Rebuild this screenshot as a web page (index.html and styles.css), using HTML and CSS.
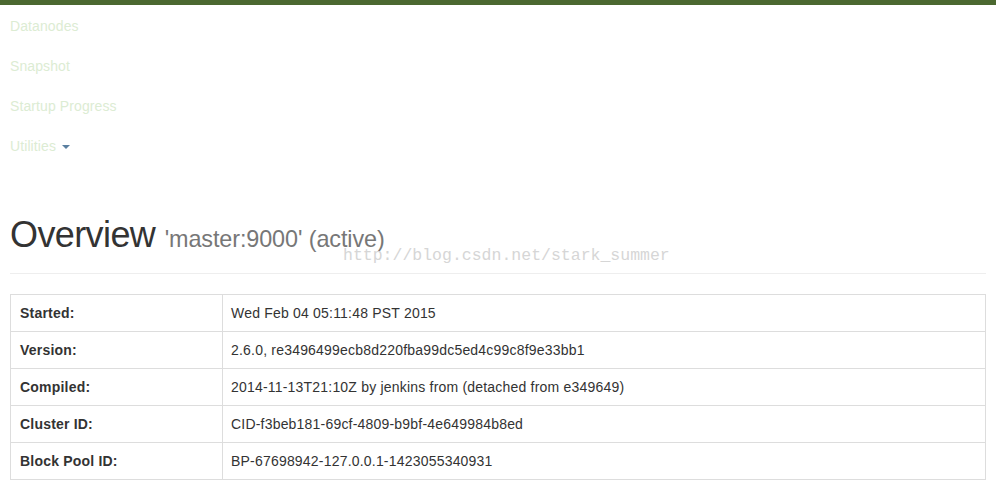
FILE: index.html
```html
<!DOCTYPE html>
<html lang="en">
<head>
    <meta charset="UTF-8">
    <title>Namenode information</title>
    <link rel="stylesheet" href="styles.css">
</head>
<body>
    <div class="topbar"></div>
    <ul class="nav">
        <li><a href="#">Datanodes</a></li>
        <li><a href="#">Snapshot</a></li>
        <li><a href="#">Startup Progress</a></li>
        <li><a href="#">Utilities <span class="caret"></span></a></li>
    </ul>

    <div class="container">
        <div class="page-header">
            <h1>Overview <small>'master:9000' (active)</small></h1>
        </div>

        <table class="overview">
            <tr><th>Started:</th><td>Wed Feb 04 05:11:48 PST 2015</td></tr>
            <tr><th>Version:</th><td>2.6.0, re3496499ecb8d220fba99dc5ed4c99c8f9e33bb1</td></tr>
            <tr><th>Compiled:</th><td>2014-11-13T21:10Z by jenkins from (detached from e349649)</td></tr>
            <tr><th>Cluster ID:</th><td>CID-f3beb181-69cf-4809-b9bf-4e649984b8ed</td></tr>
            <tr><th>Block Pool ID:</th><td>BP-67698942-127.0.0.1-1423055340931</td></tr>
        </table>
    </div>

    <div class="watermark">http://blog.csdn.net/stark_summer</div>
</body>
</html>
```

FILE: styles.css
```css
body {
    font-family: "Liberation Sans", Arial, sans-serif;
    font-size: 14px;
    line-height: 20px;
    color: #333;
    background: #fff;
    margin: 0;
    padding: 0;
}
.topbar {
    height: 5px;
    background-color: #4b6830;
}
.nav {
    list-style: none;
    margin: 1px 0 0 0;
    padding: 0;
}
.nav li a {
    display: block;
    padding: 10px 10px;
    color: #dcecd3;
    letter-spacing: 0.1px;
    text-decoration: none;
}
.caret {
    display: inline-block;
    width: 0;
    height: 0;
    margin-left: 2px;
    vertical-align: middle;
    border-top: 4px solid #5a7fa0;
    border-left: 4px solid transparent;
    border-right: 4px solid transparent;
}
.container {
    padding: 0 10px;
}
.page-header {
    margin: 49px 0 20px;
    padding-bottom: 8px;
    border-bottom: 1px solid #eee;
}
h1 {
    font-size: 36px;
    font-weight: normal;
    line-height: 1.1;
    letter-spacing: -0.6px;
    margin: 0 0 10px;
}
h1 small {
    font-size: 23.4px;
    letter-spacing: -0.1px;
    color: #777;
}
.overview {
    width: 100%;
    border-collapse: collapse;
    border: 1px solid #ddd;
}
.overview th,
.overview td {
    padding: 8px;
    border: 1px solid #ddd;
    text-align: left;
    vertical-align: top;
    letter-spacing: 0.2px;
}
.overview th {
    width: 194px;
    padding-left: 9px;
}
.watermark {
    position: absolute;
    left: 343px;
    top: 246px;
    font-family: "Liberation Mono", monospace;
    font-size: 16.5px;
    color: #d6d6d6;
}
```
